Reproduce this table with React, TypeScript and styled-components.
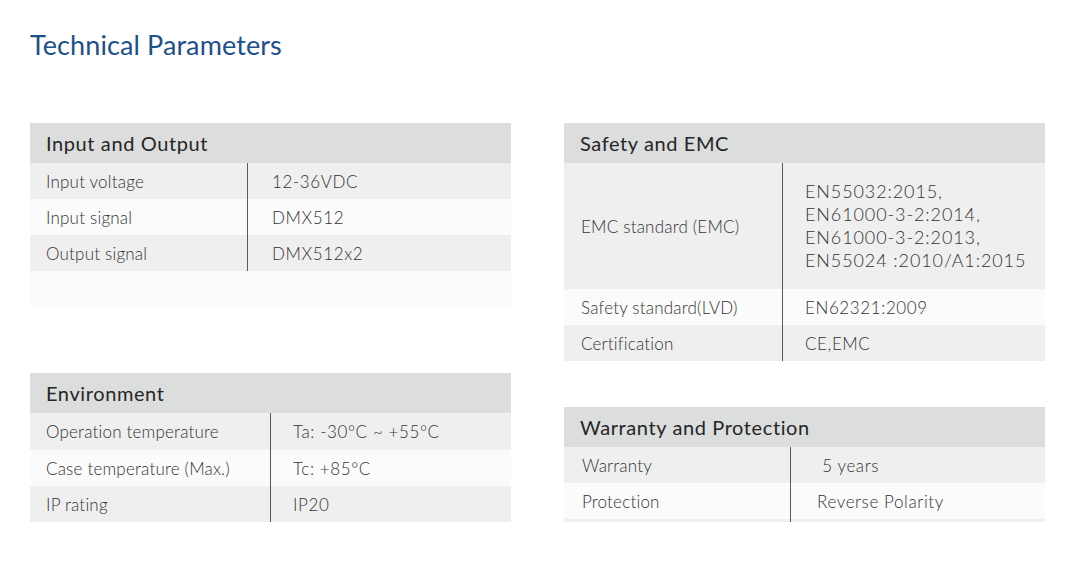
import React from "react";
import styled, { createGlobalStyle } from "styled-components";

const Global = createGlobalStyle`
  html, body { margin: 0; padding: 0; background: #ffffff; }
  body { font-family: Lato, "Open Sans", sans-serif; }
`;

const Page = styled.div`
  width: 1084px;
  height: 569px;
  box-sizing: border-box;
  padding: 28px 39px 0 30px;
`;

const Title = styled.h1`
  margin: 0;
  height: 95px;
  font-family: Lato, sans-serif;
  font-weight: 400;
  font-size: 27px;
  line-height: 34px;
  color: #1d4f8b;
  letter-spacing: 0.1px;
`;

const Columns = styled.div`
  display: grid;
  grid-template-columns: 481px 481px;
  column-gap: 53px;
`;

const Column = styled.div<{ $gap: number }>`
  display: flex;
  flex-direction: column;
  gap: ${(p) => p.$gap}px;
`;

const Table = styled.div`
  display: flex;
  flex-direction: column;
`;

const Header = styled.div`
  height: 40px;
  background: #dcdddd;
  display: flex;
  align-items: center;
  padding-left: 16px;
  font-size: 20px;
  letter-spacing: 0.6px;
  color: #262626;
`;

const Row = styled.div<{ $label: number; $h?: number; $alt?: boolean }>`
  display: grid;
  grid-template-columns: ${(p) => p.$label}px 1fr;
  height: ${(p) => p.$h ?? 36}px;
  background: ${(p) => (p.$alt ? "#fbfbfb" : "#efefef")};
`;

const Label = styled.div<{ $pad?: number }>`
  display: flex;
  align-items: center;
  padding-left: ${(p) => p.$pad ?? 16}px;
  font-size: 17px;
  font-weight: 300;
  color: #333333;
  letter-spacing: 0.2px;
`;

const Value = styled.div<{ $pad: number }>`
  display: flex;
  flex-direction: column;
  justify-content: center;
  padding-left: ${(p) => p.$pad}px;
  border-left: 1px solid #5a5a5a;
  font-size: 17px;
  font-weight: 300;
  line-height: 23px;
  color: #333333;
  letter-spacing: 0.6px;
`;

const StdLine = styled.span`
  font-size: 18px;
  letter-spacing: 0.9px;
`;

const Spacer = styled.div`
  height: 37px;
  background: #fbfbfb;
`;

const Rule = styled.div<{ $label: number }>`
  display: grid;
  grid-template-columns: ${(p) => p.$label}px 1fr;
  height: 3px;
  background: #efefef;
  & > div + div { border-left: 1px solid #5a5a5a; }
`;

type R = { label: string; value: React.ReactNode; h?: number };

function Section({
  title,
  rows,
  labelW,
  valPad,
  labelPad,
}: {
  title: string;
  rows: R[];
  labelW: number;
  valPad: number;
  labelPad?: number;
}) {
  return (
    <>
      <Header>{title}</Header>
      {rows.map((r, i) => (
        <Row key={r.label} $label={labelW} $h={r.h} $alt={i % 2 === 1}>
          <Label $pad={labelPad}>{r.label}</Label>
          <Value $pad={valPad}>{r.value}</Value>
        </Row>
      ))}
    </>
  );
}

export default function App() {
  return (
    <>
      <Global />
      <Page>
        <Title>Technical Parameters</Title>
        <Columns>
          <Column $gap={65}>
            <Table>
              <Section
                title="Input and Output"
                labelW={217}
                valPad={24}
                rows={[
                  { label: "Input voltage", value: "12-36VDC" },
                  { label: "Input signal", value: "DMX512" },
                  { label: "Output signal", value: "DMX512x2" },
                ]}
              />
              <Spacer />
            </Table>
            <Table>
              <Section
                title="Environment"
                labelW={240}
                valPad={22}
                rows={[
                  { label: "Operation temperature", value: "Ta: -30°C ~ +55°C", h: 37 },
                  { label: "Case temperature (Max.)", value: "Tc: +85°C" },
                  { label: "IP rating", value: "IP20" },
                ]}
              />
            </Table>
          </Column>
          <Column $gap={46}>
            <Table>
              <Section
                title="Safety and EMC"
                labelW={218}
                labelPad={17}
                valPad={22}
                rows={[
                  {
                    label: "EMC standard (EMC)",
                    h: 126,
                    value: (
                      <>
                        <StdLine>EN55032:2015,</StdLine>
                        <StdLine>EN61000-3-2:2014,</StdLine>
                        <StdLine>EN61000-3-2:2013,</StdLine>
                        <StdLine>EN55024 :2010/A1:2015</StdLine>
                      </>
                    ),
                  },
                  { label: "Safety standard(LVD)", value: "EN62321:2009" },
                  { label: "Certification", value: "CE,EMC" },
                ]}
              />
            </Table>
            <Table>
              <Section
                title="Warranty and Protection"
                labelW={226}
                labelPad={18}
                valPad={26}
                rows={[
                  { label: "Warranty", value: "\u00a05 years" },
                  { label: "Protection", value: "Reverse Polarity" },
                ]}
              />
              <Rule $label={226}>
                <div />
                <div />
              </Rule>
            </Table>
          </Column>
        </Columns>
      </Page>
    </>
  );
}
